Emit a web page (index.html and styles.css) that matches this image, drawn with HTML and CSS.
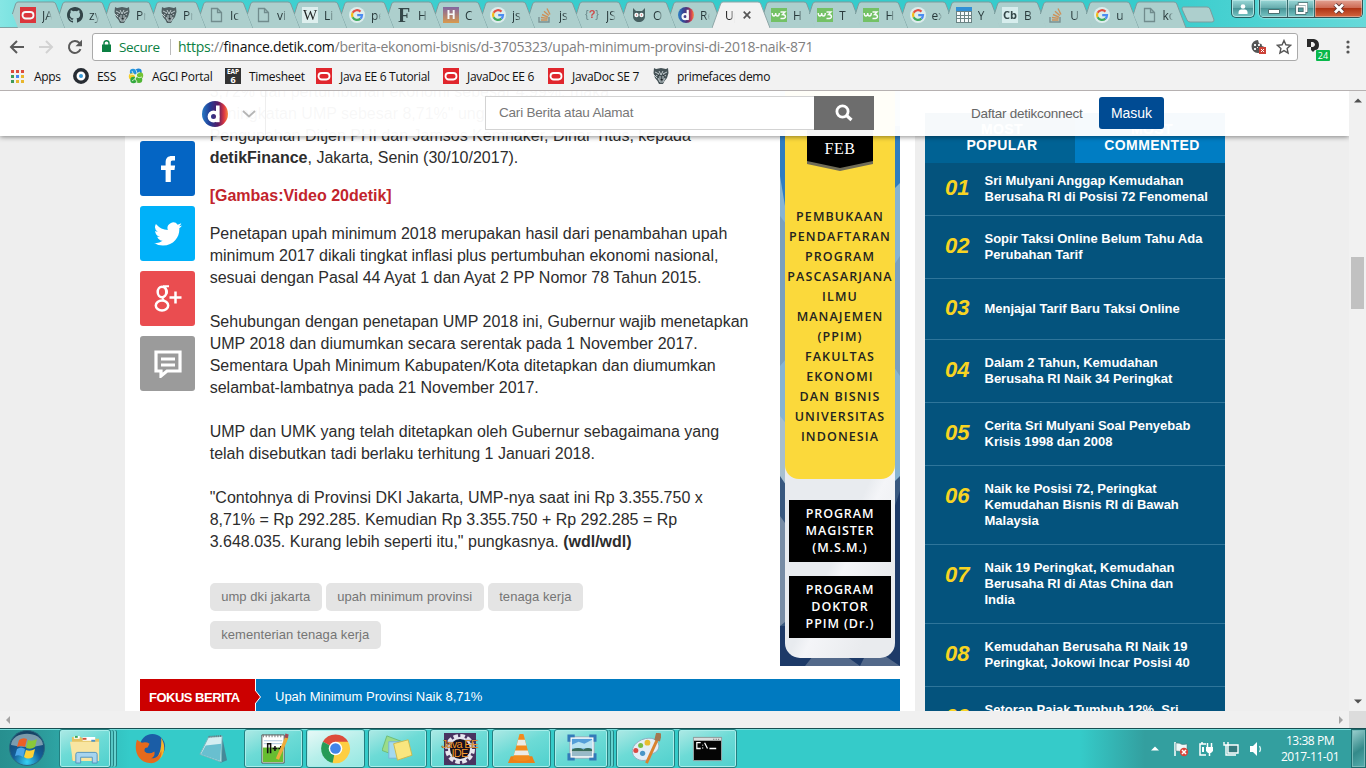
FILE: index.html
```html
<!DOCTYPE html>
<html lang="id">
<head>
<meta charset="utf-8">
<title>Upah Minimum Provinsi di 2018 Naik 8,71%</title>
<link rel="stylesheet" href="styles.css">
</head>
<body>
<svg class="defs" width="0" height="0">
  <defs>
    <symbol id="shape" viewBox="0 0 58 28"><path d="M5.4 14L8.600 4Q9.400 2 11 2H46Q48 2 48.800 4L58 28H11Z" fill="#adcfcd"/><path d="M5.400 14L8.600 4Q9.400 2 11 2H46Q48 2 48.800 4L58 28" fill="none" stroke="#7c9c9d"/></symbol>
    <symbol id="shape-on" viewBox="0 0 58 28"><path d="M0 28L8.600 4Q9.400 2 11 2H46Q48 2 48.800 4L58 28Z" fill="#f2f2f2"/><path d="M0 28L8.600 4Q9.400 2 11 2H46Q48 2 48.800 4L58 28" fill="none" stroke="#8ea6a7"/></symbol>
    <symbol id="oracle" viewBox="0 0 16 16"><path fill="#e0262d" d="M0 0h16v16H0z"/><rect x="2.500" y="5" width="11" height="6.500" rx="3.200" fill="none" stroke="#fff" stroke-width="1.800"/></symbol>
    <symbol id="github" viewBox="0 0 16 16"><path fill="#25363a" d="M8 0C3.580 0 0 3.580 0 8c0 3.540 2.290 6.530 5.470 7.590.4.070.550-.170.550-.380v-1.490c-2.230.480-2.700-.940-2.700-.940-.360-.920-.890-1.170-.890-1.170-.730-.500.060-.490.060-.490.800.060 1.230.830 1.230.830.710 1.230 1.870.870 2.330.670.070-.520.280-.870.510-1.070-1.780-.200-3.640-.890-3.640-3.950 0-.870.310-1.590.820-2.150-.080-.200-.360-1.020.080-2.120 0 0 .670-.210 2.200.820a7.600 7.600 0 0 1 4 0c1.530-1.040 2.200-.820 2.200-.820.440 1.100.160 1.920.080 2.120.510.560.820 1.270.820 2.150 0 3.070-1.870 3.750-3.650 3.950.290.250.540.730.540 1.480v2.200c0 .210.150.460.550.380A8 8 0 0 0 8 0z"/></symbol>
    <symbol id="prime" viewBox="0 0 16 16"><path fill="#465357" d="M1 0l2 1 5-1 5 1 2-1 .5 5-1.500 5-2.500 3L10 16H6l-1.500-3L2 10 .5 5z"/><path fill="none" stroke="#c3cdd0" d="M2 4l4 2-3 2m11-4l-4 2 3 2M6 3l2 4 2-4M7 8v4h3V8M5 10l2 4h3l2-4M1 7l3 3"/><path fill="#171d20" d="M4 6l2 1-1 1zm8 0l-2 1 1 1zM7 11h3l-1 2z"/></symbol>
    <symbol id="page" viewBox="0 0 16 16"><path fill="none" stroke="#6b8587" stroke-width="1.300" d="M3.500 1.500h6l4 4v9h-10zM9.500 1.500v4h4"/></symbol>
    <symbol id="google" viewBox="0 0 16 16"><circle cx="8" cy="8" r="8" fill="#e4f1f1"/><g fill="none" stroke-width="2.200"><path stroke="#ea4335" d="M11.500 4.600A5 5 0 0 0 3.600 5.800"/><path stroke="#fbbc05" d="M3.600 5.800a5 5 0 0 0 0 4.500"/><path stroke="#34a853" d="M3.600 10.300a5 5 0 0 0 7.800 1.300"/><path stroke="#4285f4" d="M11.400 11.600A4.800 4.800 0 0 0 13 8.200H8.200"/></g></symbol>
    <symbol id="stack" viewBox="0 0 16 16"><path fill="none" stroke="#75898b" stroke-width="1.400" d="M2 10v5h10v-5"/><path fill="none" stroke="#d18a4d" stroke-width="1.400" d="M4 13h6.500M4 10.500l6.600.9M5 7.500l6 2.600M7 4.300l4.800 4.300M10 1.500l3 6"/></symbol>
    <symbol id="w3" viewBox="0 0 16 16"><path fill="#6dc05a" d="M0 1h16v14H0z"/><path fill="none" stroke="#fff" stroke-width="1.400" d="M1.200 6q0 3 1.700 3T4.700 6q0 3 1.800 3T8.300 6M9.500 5H14l-2.500 2.500q3 0 3 2.200t-5 1.800"/></symbol>
    <symbol id="detik" viewBox="0 0 26 26"><linearGradient id="dg"><stop offset="0" stop-color="#257ac5"/><stop offset=".3" stop-color="#233d95"/><stop offset=".62" stop-color="#571b64"/><stop offset=".85" stop-color="#de3841"/><stop offset="1" stop-color="#f5883f"/></linearGradient><circle cx="13" cy="13" r="13" fill="url(#dg)"/><circle cx="11.500" cy="15.500" r="4.200" fill="none" stroke="#fff" stroke-width="3.400"/><path fill="#fff" d="M14 4.500h3.600v16.700H14z"/></symbol>
    <symbol id="up" viewBox="0 0 8 5"><path d="M0 4.500L4 .5l4 4z"/></symbol>
  </defs>
</svg>

<header class="tabstrip">
  <div class="tabs">
    <div class="tab"><svg class="shape"><use href="#shape"/></svg><svg class="fav"><use href="#oracle"/></svg><span>JA</span></div>
    <div class="tab"><svg class="shape"><use href="#shape"/></svg><svg class="fav"><use href="#github"/></svg><span>zy</span></div>
    <div class="tab"><svg class="shape"><use href="#shape"/></svg><svg class="fav"><use href="#prime"/></svg><span>Pr</span></div>
    <div class="tab"><svg class="shape"><use href="#shape"/></svg><svg class="fav"><use href="#prime"/></svg><span>Pr</span></div>
    <div class="tab"><svg class="shape"><use href="#shape"/></svg><svg class="fav"><use href="#page"/></svg><span>Ic</span></div>
    <div class="tab"><svg class="shape"><use href="#shape"/></svg><svg class="fav"><use href="#page"/></svg><span>vi</span></div>
    <div class="tab"><svg class="shape"><use href="#shape"/></svg><b class="fav letter wiki">W</b><span>Li</span></div>
    <div class="tab"><svg class="shape"><use href="#shape"/></svg><svg class="fav"><use href="#google"/></svg><span>pe</span></div>
    <div class="tab"><svg class="shape"><use href="#shape"/></svg><b class="fav letter eff">F</b><span>H</span></div>
    <div class="tab"><svg class="shape"><use href="#shape"/></svg><b class="fav letter hibernate">H</b><span>C</span></div>
    <div class="tab"><svg class="shape"><use href="#shape"/></svg><svg class="fav"><use href="#google"/></svg><span>js</span></div>
    <div class="tab"><svg class="shape"><use href="#shape"/></svg><svg class="fav"><use href="#stack"/></svg><span>js</span></div>
    <div class="tab"><svg class="shape"><use href="#shape"/></svg><b class="fav letter braces"><i>{</i>?<i>}</i></b><span>JS</span></div>
    <div class="tab"><svg class="shape"><use href="#shape"/></svg><svg class="fav" viewBox="0 0 16 16"><path fill="#3b5355" d="M2 1l3 3h6l3-3v8c0 8-12 8-12 0z"/><circle cx="5.500" cy="8" r="2.200" fill="#fff"/><circle cx="10.500" cy="8" r="2.200" fill="#fff"/><path stroke="#c33" d="M5 8h1m4 0h1"/></svg><span>O</span></div>
    <div class="tab"><svg class="shape"><use href="#shape"/></svg><svg class="fav"><use href="#detik"/></svg><span>Re</span></div>
    <div class="tab active"><svg class="shape"><use href="#shape-on"/></svg><span>Up</span><svg class="close" viewBox="0 0 8 8"><path d="M.7.7l6.600 6.600M7.300.7L.7 7.300" stroke="#555" stroke-width="1.700"/></svg></div>
    <div class="tab late"><svg class="shape"><use href="#shape"/></svg><svg class="fav"><use href="#w3"/></svg><span>H</span></div>
    <div class="tab late"><svg class="shape"><use href="#shape"/></svg><svg class="fav"><use href="#w3"/></svg><span>T</span></div>
    <div class="tab late"><svg class="shape"><use href="#shape"/></svg><svg class="fav"><use href="#w3"/></svg><span>H</span></div>
    <div class="tab late"><svg class="shape"><use href="#shape"/></svg><svg class="fav"><use href="#google"/></svg><span>ex</span></div>
    <div class="tab late"><svg class="shape"><use href="#shape"/></svg><svg class="fav" viewBox="0 0 16 16"><path fill="#647b7d" d="M0 0h16v16H0z"/><path fill="#258ad8" d="M0 0h16v4H0z"/><path fill="#fff" d="M1 5h3v3H1zm4 0h3v3H5zm4 0h3v3H9zm4 0h2v3h-2zM1 9h3v2H1zm4 0h3v2H5zm4 0h3v2H9zm4 0h2v2h-2zM1 12h3v3H1zm4 0h3v3H5zm4 0h3v3H9zm4 0h2v3h-2z"/></svg><span>Y</span></div>
    <div class="tab late"><svg class="shape"><use href="#shape"/></svg><b class="fav letter cb">Cb</b><span>B</span></div>
    <div class="tab late"><svg class="shape"><use href="#shape"/></svg><svg class="fav"><use href="#stack"/></svg><span>U</span></div>
    <div class="tab late"><svg class="shape"><use href="#shape"/></svg><svg class="fav"><use href="#google"/></svg><span>u</span></div>
    <div class="tab late"><svg class="shape"><use href="#shape"/></svg><svg class="fav"><use href="#page"/></svg><span>ko</span></div>
    <svg class="newtab" viewBox="0 0 34 18"><path d="M2 1h24q2 0 3 2l4 11q0 2-2 2H9q-2 0-3-2L1 3q0-2 1-2z" fill="#adcfcd" stroke="#7c9c9d"/></svg>
  </div>
  <div class="window-buttons">
    <div class="wb user"><svg width="12" height="12" viewBox="0 0 12 12"><circle cx="6" cy="3.500" r="2.300" fill="#fff"/><path fill="#fff" d="M1.500 11V9.500C1.500 7 3 6.500 6 6.500s4.500.5 4.500 3V11z"/></svg></div>
    <div class="wb-group">
      <div class="wb min"><svg width="12" height="16" viewBox="0 0 12 16"><path fill="#fff" stroke="#4b6f70" d="M.5 8.500h11v4H.5z"/></svg></div>
      <div class="wb max"><svg width="13" height="13" viewBox="0 0 13 13"><path fill="none" stroke="#48696b" stroke-width="3.500" d="M4.500 3V2h7v7h-1M2 4.500h7.500V11H2z"/><path fill="none" stroke="#fff" stroke-width="1.800" d="M4.500 3V2h7v7h-1M2 4.500h7.500V11H2z"/></svg></div>
      <div class="wb x"><svg width="12" height="11" viewBox="0 0 12 11"><path stroke="#5e3535" stroke-width="4.500" d="M2 1.500l8 8m0-8l-8 8"/><path stroke="#fff" stroke-width="2.700" d="M2 1.500l8 8m0-8l-8 8"/></svg></div>
    </div>
  </div>
</header>

<div class="toolbar">
  <svg class="nav" viewBox="0 0 16 16"><path d="M15 8H2.500M8 2L2 8l6 6" stroke="#5a5a5a"/></svg>
  <svg class="nav" viewBox="0 0 16 16"><path d="M1 8h12.500M8 2l6 6-6 6" stroke="#d2d2d2"/></svg>
  <svg class="nav" viewBox="0 0 16 16"><path d="M13.500 10.200A6 6 0 1 1 12.400 3.900L14 5.600" stroke="#5a5a5a"/><path d="M15 .8v6.500H8.500z" fill="#5a5a5a" stroke="none"/></svg>
  <div class="omnibox">
    <svg class="lock" viewBox="0 0 9 12"><path fill="#0b8043" d="M0 4.500h9V12H0z"/><path fill="none" stroke="#0b8043" stroke-width="1.400" d="M2 5V3a2.500 2.300 0 0 1 5 0v2"/></svg>
    <span class="secure">Secure</span>
    <span class="url"><em>https</em>://<strong>finance.detik.com</strong>/berita-ekonomi-bisnis/d-3705323/upah-minimum-provinsi-di-2018-naik-871</span>
    <svg class="cookie" viewBox="0 0 16 16"><path fill="#555" d="M7 1a6.500 6.500 0 1 0 6.500 7L11 7l-.5-2L8 4.500z"/><path fill="#eee" d="M3 5h2v2H3zm4 0h2v2H7zM3 9h2v2H3zM6 8h1v1H6z"/><path fill="#cc4237" d="M8 8h7v7H8z"/><path stroke="#fff" d="M10 10l3 3m0-3l-3 3"/></svg>
    <svg class="star" viewBox="0 0 16 16"><path fill="none" stroke="#555" stroke-width="1.400" d="M8 1.500l1.900 4.300 4.700.5-3.500 3.100 1 4.600L8 11.600 3.900 14l1-4.600L1.400 6.300l4.700-.5z"/></svg>
  </div>
  <div class="ext"><svg viewBox="0 0 12 13"><path fill="#2a2a2a" fill-rule="evenodd" d="M0 0h7q5 1 5 6t-4 5l-2 2-2-2V8H0zM4 3v5h2q2-1 2-2.500T6 3z"/></svg><span>24</span></div>
  <svg class="dots" viewBox="0 0 4 14"><circle cx="2" cy="2" r="1.600"/><circle cx="2" cy="7" r="1.600"/><circle cx="2" cy="12" r="1.600"/></svg>
</div>

<nav class="bookmarks">
  <a class="bm b1"><svg viewBox="0 0 16 16"><path fill="#dd4b3e" d="M1 2h3v3H1zm5 0h3v3H6zm5 0h3v3h-3z"/><path fill="#3f9b59" d="M1 7h3v3H1z"/><path fill="#4285f4" d="M6 7h3v3H6z"/><path fill="#e8b62c" d="M11 7h3v3h-3zm-5 5h3v3H6zm5 0h3v3h-3z"/><path fill="#3f9b59" d="M1 12h3v3H1z"/></svg>Apps</a>
  <a class="bm b2"><svg viewBox="0 0 16 16"><circle cx="8" cy="8" r="6.200" fill="#fff" stroke="#272c33" stroke-width="3.500"/><circle cx="8" cy="8" r="2" fill="#3a9bd8"/></svg>ESS</a>
  <a class="bm b3"><svg viewBox="0 0 16 16"><circle cx="5" cy="4" r="3.200" fill="#2597df"/><circle cx="10.500" cy="3.800" r="3.200" fill="#1f86d6"/><circle cx="4" cy="8.500" r="3.200" fill="#f2cd27"/><circle cx="12" cy="7.500" r="3.200" fill="#73c332"/><circle cx="5.500" cy="12" r="3.200" fill="#32a93e"/><circle cx="11" cy="11.700" r="3.300" fill="#4fb534"/><path fill="none" stroke="#eef7e6" stroke-width=".8" d="M8 2q2 3 0 6t1 6M2 7q3-2 6 1t6 1M4 3q1 4 4 5M12 4q-4 1-4 4t-4 5"/></svg>AGCI Portal</a>
  <a class="bm b4"><span class="eap"><i>EAP</i><b>6</b></span>Timesheet</a>
  <a class="bm b5"><svg><use href="#oracle"/></svg>Java EE 6 Tutorial</a>
  <a class="bm b6"><svg><use href="#oracle"/></svg>JavaDoc EE 6</a>
  <a class="bm b7"><svg><use href="#oracle"/></svg>JavaDoc SE 7</a>
  <a class="bm b8"><svg><use href="#prime"/></svg>primefaces demo</a>
</nav>

<div class="browser-view">
  <div class="page">
    <div class="site-header">
      <div class="brand"><svg class="logo"><use href="#detik"/></svg><svg class="chev" viewBox="0 0 14 8"><path fill="none" stroke="#b5b5b5" stroke-width="1.800" d="M1 1l6 5.500L13 1"/></svg></div>
      <div class="search"><span>Cari Berita atau Alamat</span><button><svg viewBox="0 0 18 18"><circle cx="7.500" cy="7.500" r="5.600" fill="none" stroke="#fff" stroke-width="2.800"/><path stroke="#fff" stroke-width="3.200" d="M11 11l5.500 5"/></svg></button></div>
      <span class="register">Daftar detikconnect</span>
      <a class="login">Masuk</a>
    </div>

    <main class="content">
      <div class="main-row">
        <div class="share">
          <a class="fb"><svg viewBox="0 0 28 28"><path fill="#fff" d="M11.600 27V15H7v-4.500h4.600V7.500C11.600 3 14 1 17.800 1H21v4.600h-2.300c-1.600 0-1.900.7-1.900 2.200v2.700h4.300l-.6 4.500h-3.700v12z"/></svg></a>
          <a class="tw"><svg viewBox="0 0 28 28"><path fill="#fff" d="M28 5.400q-1.500.7-3 .8 1.700-1 2.300-2.900-1.700 1-3.600 1.400a5.700 5.700 0 0 0-9.900 5.300Q7 9.700 1.900 3.900-.7 9 3.800 11.700q-1.500-.1-2.700-.8Q1.400 15.600 5.800 16.600q-1.300.4-2.600.1 1.400 3.700 5.400 4-3.600 2.900-8.500 2.400 4 2.500 8.800 2.500C20.500 25.500 26 16 25.300 8.200q1.600-1.200 2.700-2.800z"/></svg></a>
          <a class="gp"><svg viewBox="0 0 28 28"><g fill="none" stroke="#fff"><ellipse cx="8" cy="7" rx="4.300" ry="5.300" stroke-width="2.500"/><path stroke-width="2" d="M9 1.200h6M11 2q4 6 .2 8.500-4.500 2.500-1.200 4.500"/><ellipse cx="8" cy="20.500" rx="6.200" ry="5" stroke-width="2.500"/><path stroke-width="2.500" d="M15.500 12.500h12M21.500 6.500v12"/></g></svg></a>
          <a class="cm"><svg viewBox="0 0 28 28"><path fill="none" stroke="#fff" stroke-width="3.200" d="M2 2h24v19H13l-6 5v-5H2zM7 9h14M7 15h14"/></svg></a>
        </div>
        <article class="story">
          <p>3,72% dan pertumbuhan ekonomi sebesar 4,99%, maka<br>peningkatan UMP sebesar 8,71%" ungkap<br>Pengupahan Ditjen PHI dan Jamsos Kemnaker, Dinar Titus, kepada<br><strong>detikFinance</strong>, Jakarta, Senin (30/10/2017).</p>
          <p class="video">[Gambas:Video 20detik]</p>
          <p>Penetapan upah minimum 2018 merupakan hasil dari penambahan upah<br>minimum 2017 dikali tingkat inflasi plus pertumbuhan ekonomi nasional,<br>sesuai dengan Pasal 44 Ayat 1 dan Ayat 2 PP Nomor 78 Tahun 2015.<br><br>Sehubungan dengan penetapan UMP 2018 ini, Gubernur wajib menetapkan<br>UMP 2018 dan diumumkan secara serentak pada 1 November 2017.<br>Sementara Upah Minimum Kabupaten/Kota ditetapkan dan diumumkan<br>selambat-lambatnya pada 21 November 2017.<br><br>UMP dan UMK yang telah ditetapkan oleh Gubernur sebagaimana yang<br>telah disebutkan tadi berlaku terhitung 1 Januari 2018.<br><br>"Contohnya di Provinsi DKI Jakarta, UMP-nya saat ini Rp 3.355.750 x<br>8,71% = Rp 292.285. Kemudian Rp 3.355.750 + Rp 292.285 = Rp<br>3.648.035. Kurang lebih seperti itu," pungkasnya. <strong>(wdl/wdl)</strong></p>
          <div class="tags"><a>ump dki jakarta</a><a>upah minimum provinsi</a><a>tenaga kerja</a><a>kementerian tenaga kerja</a></div>
        </article>
        <aside class="ad">
          <svg class="facets" viewBox="0 0 120 600" preserveAspectRatio="none"><path fill="#86b4d3" d="M0 0h120v600H0z"/><path fill="#2f7dc0" d="M0 60h5v80l-5-30zM120 60h-8v65l8-8z"/><path fill="#7aa0be" d="M0 150l60 80L0 300zM120 190l-40 60 40 60z"/><path fill="#a7bfd0" d="M0 350l40 50-40 50z"/><path fill="#38587f" d="M0 410l60 90-60 100zM120 410l-10 10v180h10z"/><path fill="#778ca5" d="M0 450l50 70-50 40z"/><path fill="#1d3a68" d="M120 425L60 600h60zM0 560h60v40H0z"/><path fill="#53698a" d="M25 600l20-25 35 25zM80 600l10-20 30 20z"/></svg>
          <div class="panel">
            <div class="yellow">
              <div class="ribbon"><svg viewBox="0 0 66 70"><path fill="#6f6b57" d="M0 0h66v63L33 70 0 63z"/><path d="M0 0h66v60L33 67 0 60z"/></svg><span>FEB</span></div>
              <p>PEMBUKAAN<br>PENDAFTARAN<br>PROGRAM<br>PASCASARJANA<br>ILMU<br>MANAJEMEN<br>(PPIM)<br>FAKULTAS<br>EKONOMI<br>DAN BISNIS<br>UNIVERSITAS<br>INDONESIA</p>
            </div>
            <div class="program">PROGRAM<br>MAGISTER<br>(M.S.M.)</div>
            <div class="program">PROGRAM<br>DOKTOR<br>PPIM (Dr.)</div>
          </div>
        </aside>
      </div>
      <div class="focus"><b>FOKUS BERITA<svg viewBox="0 0 7 12"><path fill="#c00" stroke="#fff" d="M0-1l5.500 7L0 13"/></svg></b><span>Upah Minimum Provinsi Naik 8,71%</span></div>
    </main>

    <aside class="popular">
      <div class="pop-tabs"><b>MOST<br>POPULAR</b><b>MOST<br>COMMENTED</b></div>
      <ol>
        <li class="h53"><i>01</i><span>Sri Mulyani Anggap Kemudahan<br>Berusaha RI di Posisi 72 Fenomenal</span></li>
        <li class="h63"><i>02</i><span>Sopir Taksi Online Belum Tahu Ada<br>Perubahan Tarif</span></li>
        <li class="h61"><i>03</i><span>Menjajal Tarif Baru Taksi Online</span></li>
        <li class="h63"><i>04</i><span>Dalam 2 Tahun, Kemudahan<br>Berusaha RI Naik 34 Peringkat</span></li>
        <li class="h63"><i>05</i><span>Cerita Sri Mulyani Soal Penyebab<br>Krisis 1998 dan 2008</span></li>
        <li class="h79"><i>06</i><span>Naik ke Posisi 72, Peringkat<br>Kemudahan Bisnis RI di Bawah<br>Malaysia</span></li>
        <li class="h79"><i>07</i><span>Naik 19 Peringkat, Kemudahan<br>Berusaha RI di Atas China dan<br>India</span></li>
        <li class="h63"><i>08</i><span>Kemudahan Berusaha RI Naik 19<br>Peringkat, Jokowi Incar Posisi 40</span></li>
        <li class="h63"><i>09</i><span>Setoran Pajak Tumbuh 12%, Sri<br>Mulyani: Terima Kasih</span></li>
      </ol>
    </aside>
  </div>
  <div class="vscroll"><svg><use href="#up"/></svg><div class="thumb"></div><svg class="down"><use href="#up"/></svg></div>
</div>
<div class="hscroll"><svg class="left" viewBox="0 0 5 8"><path d="M5 0v8L1 4z"/></svg><svg viewBox="0 0 5 8"><path d="M0 0v8l4-4z"/></svg><div class="corner"></div></div>

<footer class="taskbar">
  <div class="start"><svg viewBox="0 0 38 38"><defs><radialGradient id="orb" cx=".5" cy=".9" r=".9"><stop offset="0" stop-color="#35d2f5"/><stop offset=".45" stop-color="#145d98"/><stop offset="1" stop-color="#17405f"/></radialGradient></defs><circle cx="19" cy="19" r="17.500" fill="url(#orb)" stroke="#29687f"/><path fill="#a6bdc5" opacity=".7" d="M3 16C4 1 34 1 35 16Q19 20 3 16z"/><path fill="#eb5f27" d="M11 11q4-3 8-1l-2 8q-4-2-8 0z"/><path fill="#8bc83a" d="M20 11q4 2 9-1l-2 8q-4 3-9 1z"/><path fill="#4ba6e8" d="M9 20q4-3 8 0l-2 8q-4-3-8-1z"/><path fill="#ffd136" d="M18 21q4 2 9-1l-2 8q-5 3-9 0z"/></svg></div>
  <div class="task stacked w52"><svg viewBox="0 0 32 32"><path fill="#e5c464" d="M2 4h9l2 2h17v22H2z"/><path fill="#fff" d="M4 3h6v3H4zm9 1h13v4H13z"/><path fill="#38a858" d="M5 3h3v2H5z"/><path fill="#cf5138" d="M13 5h4v2h-4z"/><path fill="#f8e5a1" d="M0 9h30v20H3z"/><path fill="#4c94cb" d="M22 7h4v2h-4z"/><path fill="#a6d4ef" stroke="#5495bd" d="M6 31v-9q0-2 2-2h18q2 0 2 2v9h-5v-6H11v6z"/></svg></div>
  <div class="task plain first"><svg viewBox="0 0 32 32"><circle cx="18" cy="14" r="13" fill="#1b5da6"/><path fill="#f5b52c" d="M27 5c8 13 0 26-12 26 8-3 13-11 12-26z"/><path fill="#e66a1c" d="M2 7l5 3q5-1 8 1l-2 4q-4 0-3 4 4 4 10 0c1 5-2 7-4 7 5 1 10-3 11-8 2 9-6 14-12 13C4 30-2 19 2 7z"/></svg></div>
  <div class="task plain"><svg viewBox="0 0 32 32"><path fill="#458898" d="M26 4l5 24-7 3z"/><path fill="#d4eef1" stroke="#7ab5bc" d="M12 4l14-1-1 27-22-8z"/><path fill="#69bfcf" d="M9 13l16-2-1 18-20-7z"/><path stroke="#5b7076" stroke-dasharray="1 1" stroke-width="2" d="M12 4l14-1"/></svg></div>
  <div class="task w59 gap"><svg viewBox="0 0 32 32"><path fill="#fff" stroke="#555" d="M4 2h23v29H4z"/><path fill="#67bd31" d="M5 15h21v15H5z"/><path stroke="#777" stroke-dasharray="1 2" stroke-width="3" d="M5 3h21"/><path stroke="#a9c5dd" d="M6 8h19M6 11h19"/><path fill="none" stroke="#111" stroke-width="1.600" d="M10 21V11h3v10M15 16h5m-2.500-2.500v5M21 16h5m-2.500-2.500v5"/><path stroke="#ecad3c" stroke-width="3.500" d="M20 27L30 4"/><path stroke="#a44a56" stroke-width="3.500" d="M29 5l1-4"/></svg></div>
  <div class="task w59 lit"><svg viewBox="0 0 32 32"><path fill="#dd4c3b" d="M16 16L3 9a15 15 0 0 1 26 0z"/><path fill="#259b57" d="M16 16L3 9a15 15 0 0 0 11 22z"/><path fill="#fdce42" d="M16 16L13 31A15 15 0 0 0 29 9H16z"/><circle cx="16" cy="16" r="7" fill="#fff"/><circle cx="16" cy="16" r="5.500" fill="#4285e8"/></svg></div>
  <div class="task w59"><svg viewBox="0 0 32 32"><path fill="#9bdc8a" stroke="#70bc76" d="M5 3l16 6-5 15L0 18z"/><path fill="#a5d9ef" stroke="#75b6d8" d="M7 9h16v17H7z"/><path fill="#f9e67f" stroke="#c9ba51" d="M12 11l15-4 4 16-15 5z"/></svg></div>
  <div class="task w59"><div class="javaee"><svg viewBox="0 0 32 32"><circle cx="16" cy="16" r="13" fill="none" stroke="#e6e5ee" stroke-width="4" stroke-dasharray="4.500 2.300"/><circle cx="16" cy="16" r="11" fill="#181222" stroke="#e6e5ee" stroke-width="2"/></svg><span>Java EE<br>IDE</span></div></div>
  <div class="task w59"><svg viewBox="0 0 32 32"><path fill="#ec8117" d="M5 24h22l3 7H2z"/><path fill="#f28b1d" d="M14 1h4l7 26q-9 4-18 0z"/><path fill="#ecebe6" d="M12.500 7h7l1.500 6H11zM9.500 18h13l1.500 5H8z"/></svg></div>
  <div class="task stacked w54"><svg viewBox="0 0 32 32"><path fill="#fff" stroke="#94a8b8" d="M4 4h25v22H4z"/><path fill="#559ed9" d="M6 6h21v11H6z"/><path fill="#b8e2f2" d="M6 12l7-3 6 2 8-4v9H6z"/><path fill="#376a59" d="M6 17q7-3 12 0 5-3 9 0v2H6z"/><path fill="#98bac8" d="M6 19h21v5H6z"/><path fill="none" stroke="#337ab9" stroke-width="3" d="M3 9V3h6M24 3h6v6M30 21v6h-6M9 27H3v-6"/></svg></div>
  <div class="task w59"><svg viewBox="0 0 32 32"><path fill="#e4eef6" stroke="#8eadc0" d="M12 7c18-7 23 10 12 14-5 2 0 6-7 7C3 31-5 15 12 7z"/><circle cx="6" cy="18" r="2.600" fill="#da4a42"/><circle cx="11" cy="13" r="2.600" fill="#77bd45"/><circle cx="18" cy="10" r="3" fill="#e8bd30"/><circle cx="13" cy="21" r="2.700" fill="#4a96c6"/><path stroke="#d9822f" stroke-width="3" d="M17 31L28 7"/><path stroke="#a27852" stroke-width="6" d="M28 8l2-8"/></svg></div>
  <div class="task w59"><svg viewBox="0 0 32 32"><path fill="#050505" stroke="#9ba5a6" d="M1.500 4.500h29v24h-29z"/><path fill="#d9dddd" d="M2 5h28v3H2z"/><path stroke="#555" stroke-dasharray="1 1.500" d="M22 6.500h7"/><path fill="none" stroke="#fff" stroke-width="1.300" d="M9 10H5v6h4m2-4v1m0 2v1m2-6l3 6m2 0h7"/></svg></div>
  <div class="tray">
    <svg class="more"><use href="#up"/></svg>
    <svg viewBox="0 0 16 16"><path fill="none" stroke="#fff" stroke-width="1.500" d="M2 1v14"/><path fill="#eef8f8" stroke="#467373" stroke-width=".5" d="M3 2q4 0 5 1t6 0v8q-3 1-5 0T3 10z"/><circle cx="11" cy="11" r="4.200" fill="#d8463c"/><path stroke="#fff" stroke-width="1.500" d="M9 9l4 4m0-4l-4 4"/></svg>
    <svg viewBox="0 0 16 16"><g fill="none" stroke="#fff" stroke-width="1.500"><path d="M8 3H2v11h6M4 1v2M9.500 2v4m4-4v4M11.500 11v4"/></g><path fill="#fff" d="M8 6h7v4l-2 2h-3l-2-2zM4 6h2v5H4z"/></svg>
    <svg viewBox="0 0 16 16"><path fill="#357b7e" stroke="#fff" stroke-width="1.400" d="M5 4h10v8H5z"/><path fill="none" stroke="#fff" stroke-width="1.400" d="M1 1v3h4V1M3 4v10h10"/></svg>
    <svg viewBox="0 0 16 16"><path fill="#fff" d="M2 5h3l4-4v14l-4-4H2z"/><path fill="none" stroke="#d8f2f1" stroke-width="1.300" d="M11.500 5q2 3 0 6"/></svg>
  </div>
  <div class="clock">13:38 PM<br>2017-11-01</div>
  <div class="desktop"></div>
</footer>
</body>
</html>
```
FILE: styles.css
```css
* { box-sizing: border-box; }
body { margin: 0; width: 1366px; height: 768px; overflow: hidden; display: flex; flex-direction: column; background: #f2f2f2; font-family: "Liberation Sans", Arial, sans-serif; }
p, ol { margin: 0; padding: 0; }
svg { display: block; flex: none; }
.defs { position: absolute; }

/* Tab strip */
.tabstrip { height: 28px; flex: none; display: flex; justify-content: space-between; padding-left: 7px; background: linear-gradient(90deg, #86e6e4 0, #43d2d2 90px, #35cccc 700px, #35cccc 1150px, #66d9d9 1366px); font: 12px "Open Sans", sans-serif; box-shadow: inset 0 -1px #7fa3a4; }
.tabs { display: flex; }
.tab { width: 47px; height: 28px; position: relative; flex: none; display: flex; align-items: center; padding: 2px 0 0 13px; gap: 6px; color: #28393b; }
.tab.late { width: 46.2px; }
.shape { position: absolute; left: 0; top: 0; width: 58px; height: 28px; }
.fav { width: 16px; height: 16px; position: relative; flex: none; opacity: .9; }
.tab span { position: relative; width: 10px; overflow: hidden; white-space: nowrap; -webkit-mask-image: linear-gradient(90deg, #000 50%, transparent); mask-image: linear-gradient(90deg, #000 50%, transparent); }
.letter { text-align: center; line-height: 16px; font-size: 14px; }
.wiki { background: #e4f3f2; font-family: "Liberation Serif", serif; font-weight: 400; font-size: 15px; color: #111; }
.eff { font-family: "Liberation Serif", serif; font-size: 20px; }
.hibernate { background: linear-gradient(#7d5b9d, #dd9440); color: #fff; font-size: 12px; }
.braces { color: #d23b3b; font: bold 11px/14px "Liberation Sans", sans-serif; }
.braces i { color: #5d7b7e; font-style: normal; font-weight: 400; }
.cb { background: #dcf1f1; font-size: 11px; }
.tab.active { z-index: 2; width: 46px; gap: 8px; color: #222; }
.active .close { position: relative; width: 8px; height: 8px; }
.newtab { width: 34px; height: 18px; margin: 6px 0 0 7px; }
.window-buttons { display: flex; gap: 4px; padding-right: 3px; height: 18px; }
.wb { height: 18px; display: flex; align-items: center; justify-content: center; background: linear-gradient(#9ad9d8, #68adae 45%, #4a9698 50%, #76c5c5); }
.user { width: 24px; border: 1px solid #275e60; border-top: 0; border-radius: 0 0 5px 5px; box-shadow: inset 0 0 0 1px #b2e4e3; }
.wb-group { display: flex; border: 1px solid #315355; border-top: 0; border-radius: 0 0 5px 5px; overflow: hidden; box-shadow: 0 0 2px #fff; }
.wb-group .wb { height: 17px; box-shadow: inset 0 0 0 1px rgba(255,255,255,.35); }
.min { width: 28px; border-right: 1px solid #34696b; }
.max { width: 27px; border-right: 1px solid #34696b; }
.wb.x { width: 47px; background: linear-gradient(#e3a293, #ce6b55 45%, #b03415 50%, #d3663f); }

/* Toolbar */
.toolbar { height: 37px; flex: none; display: flex; align-items: center; padding: 0 16px 0 9px; background: #f2f2f2; font-family: "Open Sans", sans-serif; }
.nav { width: 16px; height: 16px; margin-right: 13px; fill: none; stroke-width: 2; }
.nav:nth-child(3) { margin-right: 9px; }
.omnibox { width: 1206px; height: 28px; display: flex; align-items: center; padding: 0 5px 0 9px; background: #fff; border: 1px solid #aaa; border-radius: 3px; white-space: nowrap; }
.lock { width: 9px; height: 12px; margin-top: -2px; }
.secure { color: #0b8043; margin-left: 8px; width: 51px; font-size: 13.5px; letter-spacing: -.35px; }
.url { color: #808080; border-left: 1px solid #bbb; padding-left: 7px; font-size: 14px; line-height: 16px; letter-spacing: -.27px; }
.url em { color: #0b8043; font-style: normal; }
.url strong { color: #111; font-weight: 400; }
.cookie { width: 16px; height: 16px; margin-left: auto; margin-right: 9px; }
.star { width: 16px; height: 16px; }
.ext { width: 24px; height: 28px; margin-left: 9px; position: relative; padding-top: 6px; }
.ext svg { width: 12px; height: 13px; }
.ext span { position: absolute; left: 9px; top: 17px; width: 14px; height: 11px; background: #09b84b; color: #fff; border-radius: 1px; font: 9px/11px "Open Sans", sans-serif; text-align: center; }
.dots { width: 4px; height: 14px; margin-left: 15px; fill: #555; }
.bookmarks { height: 25px; flex: none; display: flex; padding-left: 10px; background: #f2f2f2; }
.bm { display: flex; align-items: center; gap: 8px; height: 22px; flex: none; color: #111; font: 12px "Open Sans", sans-serif; letter-spacing: -.3px; white-space: nowrap; }
.bm svg, .eap { width: 16px; height: 16px; flex: none; }
.b1 { width: 63px; } .b2 { width: 55px; } .b3 { width: 97px; } .b4 { width: 91px; } .b5 { width: 127px; } .b6, .b7 { width: 105px; }
.eap { background: #333; color: #fff; display: flex; flex-direction: column; align-items: center; letter-spacing: 0; }
.eap i { font: 700 6.500px/7px "Open Sans", sans-serif; }
.eap b { font: 700 9px/9px "Open Sans", sans-serif; }

/* Viewport and scrollbars */
.browser-view { height: 621px; flex: none; display: flex; border-top: 1px solid #b6b1b1; }
.page { width: 1349px; height: 620px; position: relative; overflow: hidden; display: flex; align-items: flex-start; gap: 10px; padding-left: 125px; background: #eee; }
.vscroll { width: 17px; background: #f1f1f1; display: flex; flex-direction: column; align-items: center; padding: 7px 0; }
.vscroll svg { width: 8px; height: 5px; fill: #505050; }
.thumb { width: 13px; height: 52px; margin-top: 154px; background: #c1c1c1; }
.down { margin-top: auto; transform: rotate(180deg); }
.hscroll { height: 17px; flex: none; background: #f0f0f0; display: flex; align-items: center; padding-left: 5px; }
.hscroll svg { width: 5px; height: 8px; fill: #a3a3a3; }
.hscroll svg.left { margin-right: 1329px; }
.corner { width: 17px; height: 17px; margin-left: 5px; background: #dcdcdc; flex: none; }

/* Site header floats above the article */
.site-header { position: absolute; z-index: 5; left: 0; top: 0; width: 1349px; height: 45px; display: flex; align-items: center; padding: 0 0 1px 202px; background: rgba(255,255,255,.965); box-shadow: 0 1px 5px rgba(0,0,0,.45); }
.brand { width: 64px; height: 44px; padding-top: 2px; display: flex; align-items: center; gap: 14px; border-right: 1px solid #eee; }
.logo { width: 26px; height: 26px; }
.chev { width: 14px; height: 8px; }
.search { width: 389px; height: 34px; margin: 0 97px 0 219px; display: flex; background: #fff; }
.search span { flex: 1; border: 1px solid #d3d3d3; border-right: 0; padding-left: 13px; font-size: 13.5px; line-height: 32px; color: #777; letter-spacing: -.2px; }
.search button { width: 60px; border: 0; padding: 0; background: #6d6d6d; display: flex; align-items: center; justify-content: center; }
.search button svg { width: 18px; height: 18px; }
.register { width: 128px; font-size: 13.5px; color: #666; letter-spacing: -.25px; white-space: nowrap; }
.login { width: 65px; height: 32px; border-radius: 3px; background: #004b93; color: #fff; text-align: center; line-height: 32px; font-size: 14px; }

/* Article */
.content { width: 790px; height: 620px; padding: 0 15px; background: #fff; }
.main-row { height: 588px; display: flex; align-items: flex-start; }
.share { width: 55px; padding-top: 50px; display: flex; flex-direction: column; gap: 10px; }
.share a { height: 55px; border-radius: 3px; display: flex; align-items: center; justify-content: center; }
.share svg { width: 28px; height: 28px; }
.fb { background: #0465c4; } .tw { background: #00b1f9; } .gp { background: #ea4d50; } .cm { background: #9b9b9b; }
.story { width: 585px; margin-top: -10px; padding-left: 14.7px; font-size: 16px; line-height: 22px; color: #2d2d2d; white-space: nowrap; }
.video { margin: 16px 0; color: #c2242c; font-weight: 700; }
.tags { display: flex; flex-wrap: wrap; gap: 10px 4px; width: 440px; margin-top: 30px; }
.tags a { height: 28px; padding: 0 11.500px; border-radius: 5px; background: #e4e4e4; color: #757575; font-size: 13px; line-height: 27px; letter-spacing: .06px; }
.ad { width: 120px; height: 600px; margin-top: -25px; position: relative; }
.facets { position: absolute; width: 120px; height: 600px; }
.panel { position: relative; width: 110px; height: 592px; margin: 0 auto; border-radius: 0 0 15px 15px; background: linear-gradient(115deg, #e8ebef 72%, #f4f5f8 76%, #e9ebee 90%); text-align: center; font-family: "Open Sans", sans-serif; display: flex; flex-direction: column; align-items: center; }
.yellow { width: 110px; height: 413px; background: #fbd93b; border-radius: 0 0 14px 14px; padding-top: 35px; color: #23241f; }
.yellow p { font-size: 12.5px; font-weight: 600; line-height: 20px; letter-spacing: 1.1px; margin: 36px -5px 0; white-space: nowrap; }
.ribbon { width: 66px; height: 70px; margin: 0 auto; display: flex; align-items: flex-end; justify-content: center; color: #fff; font: 16px/18px "Liberation Serif", serif; letter-spacing: .5px; }
.ribbon svg { position: absolute; width: 66px; height: 70px; }
.ribbon span { position: relative; padding-bottom: 13px; }
.program { width: 102px; height: 62px; margin-top: 14px; padding-top: 5px; background: #000; color: #fff; font-size: 12.500px; font-weight: 600; line-height: 17px; letter-spacing: .9px; }
.yellow + .program { margin-top: 21px; }
.focus { width: 760px; height: 40px; display: flex; background: #007ac0; color: #fff; font-size: 13px; line-height: 35px; }
.focus b { position: relative; width: 116px; padding: 1px 0 0 9px; font-size: 13px; letter-spacing: -.5px; background: #c00; border-right: 1px solid #fff; white-space: nowrap; }
.focus svg { position: absolute; right: -7px; top: 12px; width: 7px; height: 12px; }
.focus span { padding-left: 19px; }

/* Popular list */
.popular { width: 300px; margin-top: 22px; background: #04537d; color: #fff; }
.pop-tabs { display: flex; height: 50px; font-size: 14px; line-height: 16px; text-align: center; letter-spacing: .4px; }
.pop-tabs b { width: 150px; padding: 8px 0 0 4px; background: #006294; }
.pop-tabs b + b { background: #007dc3; }
.popular li { display: flex; align-items: center; padding: 0 0 1px 20px; border-bottom: 1px solid #2f759a; list-style: none; }
.popular i { width: 39.5px; flex: none; color: #f8d422; font-weight: 700; font-size: 22px; line-height: 24px; padding-bottom: 1px; }
.popular span { font-size: 13px; font-weight: 700; line-height: 16px; white-space: nowrap; }
.h53 { height: 53px; } .h61 { height: 61px; } .h63 { height: 63px; } .h79 { height: 79px; }
.h79 i { margin-bottom: 17px; }

/* Taskbar */
.taskbar { height: 40px; flex: none; display: flex; align-items: stretch; border-top: 1px solid #174f52; background: linear-gradient(90deg, #278f8f 0, #2c9a9a 40px, #35cbc9 130px, #35cbc9 1080px, #339f9f 1145px, #339f9f 1366px); box-shadow: inset 0 1px #76dddb; }
.start { width: 59px; padding: 0 0 0 8px; }
.start svg { width: 38px; height: 38px; }
.task { height: 39px; margin-right: 3px; display: flex; align-items: center; justify-content: center; border: 1px solid #247f80; border-radius: 3px; background: linear-gradient(155deg, #aee9e5 0, #6ddbd6 45%, #4fd0cd 100%); box-shadow: inset 0 0 0 1px #a8eeea; flex: none; }
.task > svg { width: 31px; height: 31px; }
.w59 { width: 59px; } .w52 { width: 52px; } .w54 { width: 54px; }
.stacked { margin-right: 10px; box-shadow: inset 0 0 0 1px #a8eeea, 3px 0 0 -1px #58c7c5, 4px 0 0 -1px #228383, 6px 0 0 -1px #65d2cf, 7px 0 0 -1px #228383; }
.w54.stacked { margin-right: 8px; }
.task.plain { width: 59px; background: none; border: 0; box-shadow: none; }
.gap { margin-left: -1px; }
.lit { background: linear-gradient(155deg, #e9f9f7 0, #b6efea 50%, #94e8e2 100%); }
.javaee { width: 32px; height: 32px; background: #493461; position: relative; }
.javaee span { position: absolute; left: -5px; top: 7px; width: 42px; color: #f69a31; font: 400 11px/9px "Liberation Sans", sans-serif; letter-spacing: -.7px; text-align: center; white-space: nowrap; text-shadow: 0 0 1px #000; }
.tray { margin-left: auto; display: flex; align-items: center; gap: 9px; }
.tray svg { width: 16px; height: 16px; }
.tray .more { width: 8px; height: 5px; fill: #fff; margin-right: 5px; }
.clock { width: 87px; padding: 4px 0 0 5px; text-align: center; color: #fff; font: 12px/16px "Open Sans", sans-serif; letter-spacing: -.45px; }
.desktop { width: 15px; border: 1px solid #1d6d6f; background: linear-gradient(145deg, #9dd1d0, #348a8a 55%, #55adad); box-shadow: inset 0 0 0 1px #77bab9; }
```
